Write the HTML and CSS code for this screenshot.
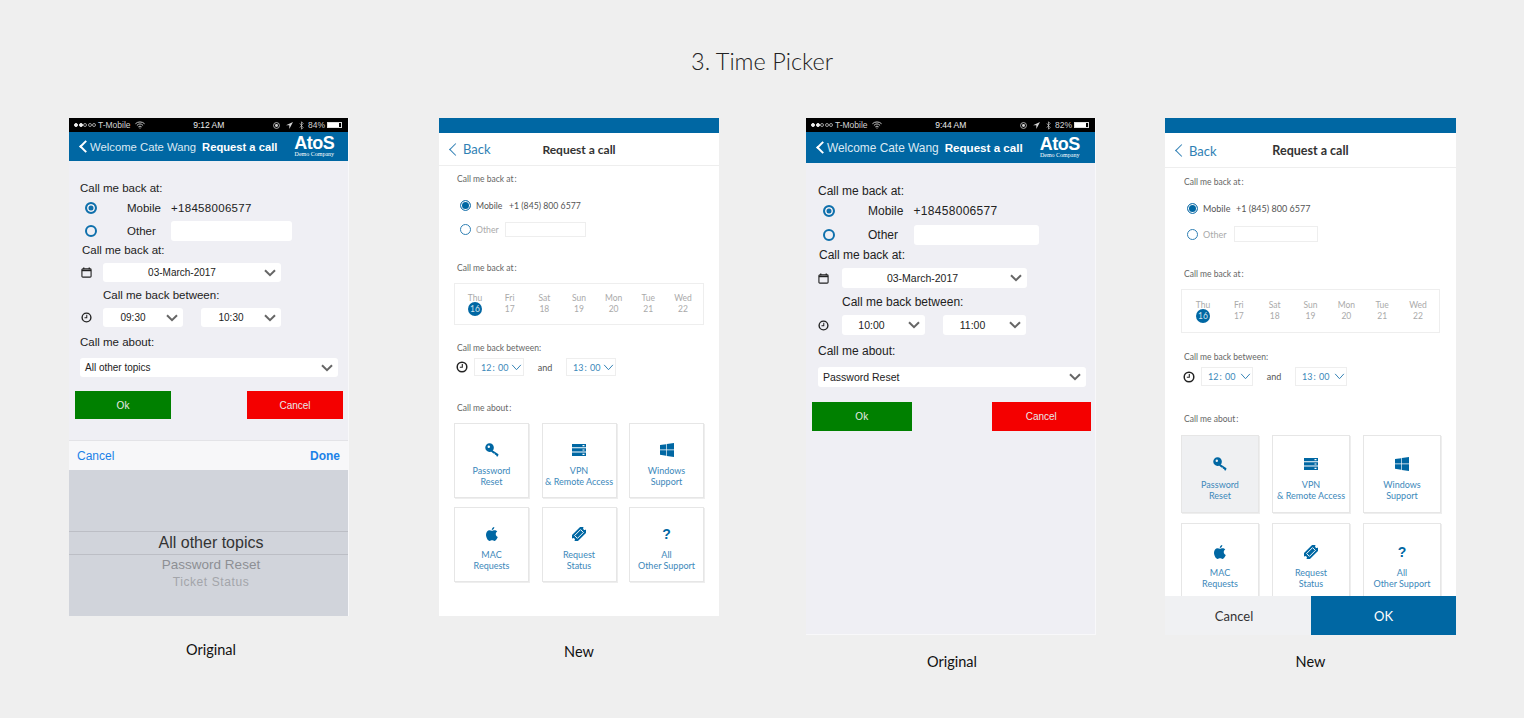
FILE: index.html
```html
<!DOCTYPE html>
<html lang="en">
<head>
  <meta charset="UTF-8" />
  <title>3. Time Picker</title>
  <link rel="stylesheet" href="styles.css">
</head>
<body>
  <svg class="sprite" width="0" height="0">
    <symbol id="i-chev" viewBox="0 0 12 8"><path d="M1 1.200l5 5 5-5" fill="none" stroke="currentColor" stroke-width="2"/></symbol>
    <symbol id="i-chev-thin" viewBox="0 0 12 8"><path d="M1 1l5 5.500L11 1" fill="none" stroke="currentColor" stroke-width="1.100"/></symbol>
    <symbol id="i-cal" viewBox="0 0 12 12"><path d="M3 .5v2M9 .5v2" stroke="currentColor" stroke-width="1.400"/><rect x="1" y="2" width="10" height="9" rx="1" fill="none" stroke="currentColor" stroke-width="1.200"/><path d="M1 3h10v1.600H1z" fill="currentColor"/></symbol>
    <symbol id="i-clock" viewBox="0 0 12 12"><circle cx="6" cy="6" r="4.800" fill="none" stroke="currentColor" stroke-width="1.500"/><path d="M6.300 3v3.200H3.800" fill="none" stroke="currentColor" stroke-width="1.100"/></symbol>
    <symbol id="i-key" viewBox="0 0 14 14"><path d="M4.600.3a4.300 4.300 0 1 1-.1 8.600 4.300 4.300 0 0 1 .1-8.600zm-.8 2.200a1.200 1.200 0 1 0 0 2.400 1.200 1.200 0 0 0 0-2.400z" fill-rule="evenodd" fill="currentColor"/><path d="M7 7l6.500 4.200-.6 2.300-1.500-.3-.2-1.300-1.300-.1-.2-1.300-1.300-.1L6 8.400z" fill="currentColor"/></symbol>
    <symbol id="i-server" viewBox="0 0 14 12"><path d="M0 0h14v3.300H0zM0 4.300h14v3.300H0zM0 8.600h14V12H0z" fill="currentColor"/><path d="M10.500 1h2v1.200h-2zM10.500 5.400h2v1.200h-2zM10.500 9.700h2v1.200h-2z" fill="#fff"/></symbol>
    <symbol id="i-win" viewBox="0 0 13 13"><path d="M0 1.900l5.700-.8v5H0zM6.300 1L13 0v6.100H6.300zM0 6.800h5.700v5L0 11zM6.300 6.800H13V13l-6.700-1z" fill="currentColor"/></symbol>
    <symbol id="i-apple" viewBox="0 0 12 14"><path d="M8.300 0c.1 1.400-1 2.900-2.500 3C5.600 1.700 6.900.2 8.300 0zM5.900 3.800c.7 0 1.500-.6 2.700-.6 1 0 2 .5 2.700 1.400-2.300 1.300-1.900 4.500.5 5.400-.7 1.700-1.900 3.900-3.300 3.900-.9 0-1.300-.6-2.400-.6-1.100 0-1.600.6-2.400.6C1.800 13.900 0 10.500 0 7.800c0-2.700 1.700-4.500 3.500-4.500 1 0 1.800.5 2.400.5z" fill="currentColor"/></symbol>
    <symbol id="i-ticket" viewBox="0 0 14 14"><g transform="rotate(-45 7 7)"><path d="M-1 2.800h16v2.700a1.500 1.500 0 0 0 0 3v2.700H-1V8.500a1.500 1.500 0 0 0 0-3z" fill="currentColor"/><rect x="2.800" y="5" width="8.400" height="4" fill="none" stroke="#fff" stroke-width=".9"/></g></symbol>
    <symbol id="i-wifi" viewBox="0 0 12 9"><path d="M.5 3a8 8 0 0 1 11 0M2.300 5a5.300 5.300 0 0 1 7.400 0M4 6.800a2.800 2.800 0 0 1 4 0" fill="none" stroke="currentColor" stroke-width="1.100"/><path d="M6 9L4.800 7.700h2.400z" fill="currentColor"/></symbol>
    <symbol id="i-lock" viewBox="0 0 9 9"><circle cx="4.500" cy="4.500" r="3.800" fill="none" stroke="currentColor"/><circle cx="4.500" cy="4.500" r="1.900" fill="currentColor"/></symbol>
    <symbol id="i-arrow" viewBox="0 0 8 8"><path d="M8 0L0 3.700h3.800V8z" fill="currentColor"/></symbol>
    <symbol id="i-bt" viewBox="0 0 6 10"><path d="M1 2.500l4 5L3 9.500V.5l2 2-4 5" fill="none" stroke="currentColor" stroke-width=".8"/></symbol>
  </svg>

  <h1 class="title">3. Time Picker</h1>

  <div class="board">

    <div class="col col-a">
      <div class="phone orig">
        <div class="status">
          <span class="carrier"><span class="dot on"></span><span class="dot on"></span><span class="dot"></span><span class="dot"></span><span class="dot"></span><span class="carrier-name">T-Mobile</span><svg class="wifi"><use href="#i-wifi"/></svg></span>
          <span class="clock-time">9:12 AM</span>
          <span class="status-right"><svg class="st-ic"><use href="#i-lock"/></svg><svg class="st-ic"><use href="#i-arrow"/></svg><svg class="st-bt"><use href="#i-bt"/></svg><span>84%</span><span class="battery"><span class="battery-fill"></span></span></span>
        </div>
        <div class="o-nav">
          <span class="o-chevron"></span>
          <span class="o-welcome">Welcome Cate Wang</span>
          <span class="o-navtitle">Request a call</span>
          <span class="logo"><span class="logo-main">AtoS</span><span class="logo-sub">Demo Company</span></span>
        </div>
        <div class="o-label o-h1">Call me back at:</div>
        <div class="o-row o-mobile"><span class="o-radio on"></span><span class="o-name">Mobile</span><span class="o-num">+18458006577</span></div>
        <div class="o-row o-other"><span class="o-radio"></span><span class="o-name">Other</span><span class="o-input"></span></div>
        <div class="o-label o-h2">Call me back at:</div>
        <div class="o-row o-date"><svg class="o-ic"><use href="#i-cal"/></svg><span class="o-select o-date-sel"><span>03-March-2017</span><svg class="chev"><use href="#i-chev"/></svg></span></div>
        <div class="o-label o-h3">Call me back between:</div>
        <div class="o-row o-times"><svg class="o-ic"><use href="#i-clock"/></svg><span class="o-select o-time-sel"><span>09:30</span><svg class="chev"><use href="#i-chev"/></svg></span><span class="o-select o-time-sel"><span>10:30</span><svg class="chev"><use href="#i-chev"/></svg></span></div>
        <div class="o-label o-h4">Call me about:</div>
        <div class="o-row o-topic"><span class="o-select o-topic-sel"><span>All other topics</span><svg class="chev"><use href="#i-chev"/></svg></span></div>
        <div class="o-actions"><span class="o-btn ok">Ok</span><span class="o-btn cancel">Cancel</span></div>
        <div class="toolbar"><span>Cancel</span><b>Done</b></div>
        <div class="picker">
          <div class="pick-main">All other topics</div>
          <div class="pick-two">Password Reset</div>
          <div class="pick-three">Ticket Status</div>
        </div>
      </div>
      <div class="caption cap-a">Original</div>
    </div>

    <div class="col col-b">
      <div class="phone new">
        <div class="n-bar"></div>
        <div class="n-nav"><span class="n-back"><span class="n-chevron"></span>Back</span><span class="n-title">Request a call</span></div>
        <div class="n-body">
          <div class="n-label n-h1">Call me back at<i>:</i></div>
          <div class="n-row n-mobile"><span class="n-radio on"></span><span class="n-name">Mobile</span><span>+1 (845) 800 6577</span></div>
          <div class="n-row n-other"><span class="n-radio"></span><span class="n-name dim">Other</span><span class="n-input"></span></div>
          <div class="n-label n-h2">Call me back at<i>:</i></div>
          <div class="days">
            <div class="day"><span>Thu</span><span class="num sel">16</span></div>
            <div class="day"><span>Fri</span><span class="num">17</span></div>
            <div class="day"><span>Sat</span><span class="num">18</span></div>
            <div class="day"><span>Sun</span><span class="num">19</span></div>
            <div class="day"><span>Mon</span><span class="num">20</span></div>
            <div class="day"><span>Tue</span><span class="num">21</span></div>
            <div class="day"><span>Wed</span><span class="num">22</span></div>
          </div>
          <div class="n-label n-h3">Call me back between:</div>
          <div class="n-row n-times"><svg class="n-clock"><use href="#i-clock"/></svg><span class="n-select">12<i>:</i> 00<svg class="chev-thin"><use href="#i-chev-thin"/></svg></span><span class="n-and">and</span><span class="n-select">13<i>:</i> 00<svg class="chev-thin"><use href="#i-chev-thin"/></svg></span></div>
          <div class="n-label n-h4">Call me about<i>:</i></div>
          <div class="tiles">
            <div class="tile"><svg class="t-ic"><use href="#i-key"/></svg><span>Password<br>Reset</span></div>
            <div class="tile"><svg class="t-ic"><use href="#i-server"/></svg><span>VPN<br>&amp; Remote Access</span></div>
            <div class="tile"><svg class="t-ic"><use href="#i-win"/></svg><span>Windows<br>Support</span></div>
            <div class="tile"><svg class="t-ic"><use href="#i-apple"/></svg><span>MAC<br>Requests</span></div>
            <div class="tile"><svg class="t-ic"><use href="#i-ticket"/></svg><span>Request<br>Status</span></div>
            <div class="tile"><b class="t-q">?</b><span>All<br>Other Support</span></div>
          </div>
        </div>
      </div>
      <div class="caption cap-b">New</div>
    </div>

    <div class="col col-c">
      <div class="phone orig orig-lg">
        <div class="status">
          <span class="carrier"><span class="dot on"></span><span class="dot on"></span><span class="dot"></span><span class="dot"></span><span class="dot"></span><span class="carrier-name">T-Mobile</span><svg class="wifi"><use href="#i-wifi"/></svg></span>
          <span class="clock-time">9:44 AM</span>
          <span class="status-right"><svg class="st-ic"><use href="#i-lock"/></svg><svg class="st-ic"><use href="#i-arrow"/></svg><svg class="st-bt"><use href="#i-bt"/></svg><span>82%</span><span class="battery"><span class="battery-fill"></span></span></span>
        </div>
        <div class="o-nav">
          <span class="o-chevron"></span>
          <span class="o-welcome">Welcome Cate Wang</span>
          <span class="o-navtitle">Request a call</span>
          <span class="logo"><span class="logo-main">AtoS</span><span class="logo-sub">Demo Company</span></span>
        </div>
        <div class="o-label o-h1">Call me back at:</div>
        <div class="o-row o-mobile"><span class="o-radio on"></span><span class="o-name">Mobile</span><span class="o-num">+18458006577</span></div>
        <div class="o-row o-other"><span class="o-radio"></span><span class="o-name">Other</span><span class="o-input"></span></div>
        <div class="o-label o-h2">Call me back at:</div>
        <div class="o-row o-date"><svg class="o-ic"><use href="#i-cal"/></svg><span class="o-select o-date-sel"><span>03-March-2017</span><svg class="chev"><use href="#i-chev"/></svg></span></div>
        <div class="o-label o-h3">Call me back between:</div>
        <div class="o-row o-times"><svg class="o-ic"><use href="#i-clock"/></svg><span class="o-select o-time-sel"><span>10:00</span><svg class="chev"><use href="#i-chev"/></svg></span><span class="o-select o-time-sel"><span>11:00</span><svg class="chev"><use href="#i-chev"/></svg></span></div>
        <div class="o-label o-h4">Call me about:</div>
        <div class="o-row o-topic"><span class="o-select o-topic-sel"><span>Password Reset</span><svg class="chev"><use href="#i-chev"/></svg></span></div>
        <div class="o-actions"><span class="o-btn ok">Ok</span><span class="o-btn cancel">Cancel</span></div>
      </div>
      <div class="caption cap-c">Original</div>
    </div>

    <div class="col col-d">
      <div class="phone new new-lg">
        <div class="n-bar"></div>
        <div class="n-nav"><span class="n-back"><span class="n-chevron"></span>Back</span><span class="n-title">Request a call</span></div>
        <div class="n-body">
          <div class="n-label n-h1">Call me back at<i>:</i></div>
          <div class="n-row n-mobile"><span class="n-radio on"></span><span class="n-name">Mobile</span><span>+1 (845) 800 6577</span></div>
          <div class="n-row n-other"><span class="n-radio"></span><span class="n-name dim">Other</span><span class="n-input"></span></div>
          <div class="n-label n-h2">Call me back at<i>:</i></div>
          <div class="days">
            <div class="day"><span>Thu</span><span class="num sel">16</span></div>
            <div class="day"><span>Fri</span><span class="num">17</span></div>
            <div class="day"><span>Sat</span><span class="num">18</span></div>
            <div class="day"><span>Sun</span><span class="num">19</span></div>
            <div class="day"><span>Mon</span><span class="num">20</span></div>
            <div class="day"><span>Tue</span><span class="num">21</span></div>
            <div class="day"><span>Wed</span><span class="num">22</span></div>
          </div>
          <div class="n-label n-h3">Call me back between:</div>
          <div class="n-row n-times"><svg class="n-clock"><use href="#i-clock"/></svg><span class="n-select">12<i>:</i> 00<svg class="chev-thin"><use href="#i-chev-thin"/></svg></span><span class="n-and">and</span><span class="n-select">13<i>:</i> 00<svg class="chev-thin"><use href="#i-chev-thin"/></svg></span></div>
          <div class="n-label n-h4">Call me about<i>:</i></div>
          <div class="tiles">
            <div class="tile active"><svg class="t-ic"><use href="#i-key"/></svg><span>Password<br>Reset</span></div>
            <div class="tile"><svg class="t-ic"><use href="#i-server"/></svg><span>VPN<br>&amp; Remote Access</span></div>
            <div class="tile"><svg class="t-ic"><use href="#i-win"/></svg><span>Windows<br>Support</span></div>
            <div class="tile"><svg class="t-ic"><use href="#i-apple"/></svg><span>MAC<br>Requests</span></div>
            <div class="tile"><svg class="t-ic"><use href="#i-ticket"/></svg><span>Request<br>Status</span></div>
            <div class="tile"><b class="t-q">?</b><span>All<br>Other Support</span></div>
          </div>
        </div>
        <div class="n-footer"><span class="f-cancel">Cancel</span><span class="f-ok">OK</span></div>
      </div>
      <div class="caption cap-d">New</div>
    </div>

  </div>
</body>
</html>
```

FILE: styles.css
```css
body {
  margin: 0;
  height: 718px;
  overflow: hidden;
  background-color: #efefef;
  font-family: "Liberation Sans", Arial, sans-serif;
}

.sprite {
  display: block;
  height: 0;
}

.title {
  margin: 0;
  padding-top: 46px;
  height: 118px;
  box-sizing: border-box;
  font-family: Lato, sans-serif;
  font-weight: 300;
  font-size: 23.5px;
  line-height: 30px;
  text-align: center;
  color: #222;
}

.board {
  display: flex;
  padding-left: 69px;
}

.col-a { width: 280px; }
.col-b { width: 280px; margin-left: 90px; }
.col-c { width: 290px; margin-left: 87px; }
.col-d { width: 291px; margin-left: 69px; }

.phone {
  display: flex;
  flex-direction: column;
  overflow: hidden;
  box-sizing: border-box;
  height: 498px;
}

.caption {
  font-family: Lato, sans-serif;
  font-size: 14.5px;
  line-height: 18px;
  text-align: center;
  color: #111;
}

.cap-a { margin-top: 25px; padding-left: 4px; }
.cap-b { margin-top: 27px; }
.cap-c { margin-top: 18px; padding-left: 2px; }
.cap-d { margin-top: 18px; }

.col-c .phone, .col-d .phone { height: 517px; }

/* original app */
.orig {
  background: #efeff4;
  border-right: 1px solid #f8f8fa;
  font-size: 11.5px;
  color: #222;
}

.orig-lg {
  font-size: 12px;
  border-bottom: 1px solid #f8f8fa;
}

.status {
  display: flex;
  justify-content: space-between;
  align-items: center;
  height: 14px;
  padding: 0 4px 0 5px;
  background: #000;
  color: #d5d5d5;
  font-size: 8.5px;
  flex-shrink: 0;
}

.carrier, .status-right {
  display: flex;
  align-items: center;
}

.dot {
  width: 4px;
  height: 4px;
  margin-right: .6px;
  border: .5px solid #999;
  border-radius: 50%;
  box-sizing: border-box;
}

.dot.on {
  background: #eee;
  border-color: #eee;
}

.carrier-name { margin-left: 1px; }

.wifi { width: 10px; height: 8px; margin-left: 4px; }
.st-ic { width: 7px; height: 7px; margin-right: 6px; }
.st-bt { width: 5px; height: 9px; margin-right: 4px; }

.clock-time {
  margin-left: 0;
  font-size: 8.5px;
  color: #eee;
}

.battery {
  display: block;
  width: 15px;
  height: 6px;
  margin: 0 2px 0 2px;
  border: 1px solid #ddd;
  box-sizing: border-box;
}

.battery-fill {
  display: block;
  width: 84%;
  height: 100%;
  background: #fff;
}

.o-nav {
  display: flex;
  align-items: center;
  height: 29px;
  flex-shrink: 0;
  padding-left: 10px;
  background: #0067a3;
  color: #dbe9f3;
  font-size: 11.3px;
}

.orig-lg .o-nav { height: 31px; font-size: 11.9px; }

.o-chevron {
  width: 9px;
  height: 9px;
  margin: 0 0 0 2px;
  box-sizing: border-box;
  border-left: 2px solid #fff;
  border-bottom: 2px solid #fff;
  transform: rotate(45deg);
}

.o-navtitle {
  margin-left: 6px;
  font-weight: bold;
  font-size: 11.2px;
  color: #fff;
}

.orig-lg .o-navtitle { font-size: 11.6px; }

.logo {
  display: flex;
  flex-direction: column;
  align-items: center;
  margin-left: 17px;
  color: #fff;
}

.orig-lg .logo { margin-left: 17px; }

.logo-main {
  font-weight: bold;
  font-size: 18px;
  line-height: 15px;
  letter-spacing: -.5px;
}

.logo-sub {
  font-family: "Liberation Serif", serif;
  font-size: 6px;
  line-height: 6px;
}

.o-label {
  height: 16px;
  line-height: 16px;
  padding-left: 11px;
}

.o-h1 { margin-top: 19px; }
.o-h2 { margin-top: 1px; padding-left: 13px; }
.o-h3 { margin-top: 5px; padding-left: 34px; }
.o-h4 { margin-top: 7px; }

.o-row {
  display: flex;
  align-items: center;
  height: 20px;
}

.o-mobile { margin-top: 2px; padding-left: 16px; }
.o-other { margin-top: 3px; padding-left: 16px; }
.o-date { margin-top: 5px; height: 19px; padding-left: 12px; }
.o-times { margin-top: 5px; height: 19px; padding-left: 12px; gap: 0 18px; }
.o-topic { margin-top: 8px; height: 19px; padding-left: 11px; }

.o-radio {
  width: 8px;
  height: 8px;
  border: 2px solid #0f70ac;
  border-radius: 50%;
  box-sizing: content-box;
  flex-shrink: 0;
  margin-right: 30px;
}

.o-radio.on {
  background: #0f70ac;
  box-shadow: inset 0 0 0 1.500px #efeff4;
}

.o-name { width: 44px; }

.o-num { letter-spacing: .3px; }

.o-input {
  display: block;
  width: 121px;
  height: 20px;
  background: #fff;
  border-radius: 3px;
}

.o-ic {
  width: 11px;
  height: 11px;
  margin-right: 11px;
  color: #222;
  flex-shrink: 0;
}

.o-times .o-ic { margin-right: -7px; }

.o-select {
  display: flex;
  align-items: center;
  height: 100%;
  box-sizing: border-box;
  padding: 0 5px;
  background: #fff;
  border-radius: 3px;
  font-size: 10px;
}

.o-select > span {
  flex: 1;
  padding-right: 8px;
  text-align: center;
}

.chev {
  width: 12px;
  height: 8px;
  color: #666;
  flex-shrink: 0;
}

.o-date-sel { width: 178px; }
.o-time-sel { width: 80px; }
.o-topic-sel { width: 258px; }
.o-topic-sel > span { text-align: left; }

.o-actions {
  display: flex;
  justify-content: space-between;
  margin-top: 14px;
  padding: 0 5px 0 6px;
}

.o-btn {
  width: 96px;
  height: 28px;
  line-height: 29px;
  text-align: center;
  color: #e8e8e8;
  font-size: 10px;
}

.o-btn.ok { background: #008000; }
.o-btn.cancel { background: #f40000; }

.toolbar {
  display: flex;
  justify-content: space-between;
  align-items: center;
  margin-top: 21px;
  height: 30px;
  flex-shrink: 0;
  padding: 0 8px 0 8px;
  background: #f7f7f9;
  border-top: 1px solid #e3e3e7;
  box-sizing: border-box;
  color: #1b82e8;
  font-size: 12px;
}

.picker {
  flex: 1;
  padding-top: 61px;
  background: #d1d4db;
  text-align: center;
}

.pick-main {
  height: 22px;
  padding-left: 5px;
  line-height: 22px;
  border-top: 1px solid #bcbec5;
  border-bottom: 1px solid #bcbec5;
  font-size: 16px;
  color: #333;
}

.pick-two {
  margin-top: 1px;
  padding-left: 5px;
  font-size: 13.5px;
  line-height: 17px;
  color: #8d8f94;
}

.pick-three {
  margin-top: 2px;
  padding-left: 5px;
  font-size: 12px;
  line-height: 14px;
  letter-spacing: .6px;
  color: #a3a5aa;
}

/* .orig-lg spacing */
.orig-lg .o-label { height: 16px; }
.orig-lg .o-h1 { margin-top: 20px; }
.orig-lg .o-mobile { margin-top: 2px; padding-left: 17px; }
.orig-lg .o-other { margin-top: 4px; padding-left: 17px; }
.orig-lg .o-h2 { margin-top: 2px; }
.orig-lg .o-h3 { margin-top: 6px; padding-left: 36px; }
.orig-lg .o-h4 { margin-top: 8px; }
.orig-lg .o-date { height: 20px; padding-left: 12px; margin-top: 5px; }
.orig-lg .o-times { height: 20px; padding-left: 12px; margin-top: 5px; }
.orig-lg .o-topic { height: 20px; margin-top: 8px; padding-left: 12px; }
.orig-lg .o-label.o-h1, .orig-lg .o-label.o-h4 { padding-left: 12px; }
.orig-lg .o-radio { margin-right: 33px; }
.orig-lg .o-name { width: 45.500px; }
.orig-lg .o-input { width: 125px; }
.orig-lg .o-ic { margin-right: 13px; }
.orig-lg .o-times .o-ic { margin-right: -5px; }
.orig-lg .o-select { font-size: 10.5px; }
.orig-lg .o-select > span { padding-right: 12px; }
.orig-lg .o-topic-sel > span { padding-right: 0; }
.orig-lg .o-date-sel { width: 185px; }
.orig-lg .o-time-sel { width: 83px; }
.orig-lg .o-topic-sel { width: 268px; }
.orig-lg .o-actions { margin-top: 15px; padding: 0 4px 0 6px; }
.orig-lg .o-btn { width: 99.500px; height: 29px; line-height: 29px; }

/* redesign */
.new {
  background: #fff;
  font-family: Lato, sans-serif;
  font-size: 8.700px;
  color: #555;
}

.new-lg { font-size: 9px; }

.n-bar {
  height: 15px;
  flex-shrink: 0;
  background: #0067a3;
}

.n-nav {
  display: flex;
  align-items: center;
  height: 32px;
  flex-shrink: 0;
  position: relative;
  border-bottom: 1px solid #eee;
  box-sizing: content-box;
}

.new-lg .n-nav { height: 33px; margin-top: 1px; }

.n-back {
  display: flex;
  align-items: center;
  padding-left: 12px;
  font-size: 13px;
  color: #2f7fb4;
}

.n-chevron {
  width: 9px;
  height: 9px;
  margin-right: 3px;
  box-sizing: border-box;
  border-left: 1.300px solid #2f7fb4;
  border-bottom: 1.300px solid #2f7fb4;
  transform: rotate(45deg);
}

.n-title {
  position: absolute;
  left: 0;
  right: 0;
  text-align: center;
  font-weight: bold;
  font-size: 12px;
  color: #333;
}

.new-lg .n-title { font-size: 12.500px; }

.n-body {
  flex: 1;
  overflow: hidden;
  padding-left: 15px;
}

.new-lg .n-body { padding-left: 16px; }

.n-label {
  height: 12px;
  line-height: 12px;
  padding-left: 3px;
  font-size: 8.5px;
  color: #666;
}

.n-label i { font-style: normal; margin-left: 1px; }

.n-h1 { margin-top: 7px; }
.n-h2 { margin-top: 25px; }
.n-h3 { margin-top: 17px; }
.n-h4 { margin-top: 26px; }

.n-row {
  display: flex;
  align-items: center;
  height: 14px;
  padding-left: 6px;
}

.n-mobile { margin-top: 13px; }
.n-other { margin-top: 10px; height: 15px; }
.n-times { margin-top: 4px; height: 18px; padding-left: 2px; }

.n-radio {
  width: 9px;
  height: 9px;
  margin-right: 5px;
  border: 1px solid #2f7fb4;
  border-radius: 50%;
  flex-shrink: 0;
}

.n-radio.on {
  background: #0067a3;
  box-shadow: inset 0 0 0 1px #fff;
}

.n-name { width: 33px; color: #555; }
.n-name.dim { width: 29px; color: #aaa; }

.n-input {
  display: block;
  width: 81px;
  height: 100%;
  border: 1px solid #eee;
  box-sizing: border-box;
}

.days {
  display: flex;
  justify-content: space-between;
  box-sizing: border-box;
  width: 250px;
  height: 42px;
  margin-top: 9px;
  padding: 9px 8px 0 8px;
  border: 1px solid #eee;
}

.day {
  display: flex;
  flex-direction: column;
  align-items: center;
  width: 24px;
  font-size: 8.5px;
  line-height: 10px;
  color: #aaa;
}

.num {
  display: block;
  width: 14px;
  height: 14px;
  margin-top: -1px;
  line-height: 14px;
  text-align: center;
}

.num.sel {
  background: #0067a3;
  border-radius: 50%;
  color: #cfe2ee;
}

.n-clock {
  width: 12px;
  height: 12px;
  margin-right: 6px;
  color: #222;
  flex-shrink: 0;
}

.n-select {
  display: flex;
  align-items: center;
  justify-content: space-between;
  box-sizing: border-box;
  width: 50px;
  height: 100%;
  padding: 0 1px 0 6px;
  border: 1px solid #eee;
  font-size: 9px;
  color: #3c88ba;
  white-space: pre;
}

.n-select i { font-style: normal; margin: 0 1px; }

.chev-thin {
  width: 11px;
  height: 7px;
  color: #2f7fb4;
  margin-left: auto;
}

.n-and {
  width: 42px;
  font-size: 9px;
  text-align: center;
  color: #555;
}

.tiles {
  display: grid;
  grid-template-columns: 75px 75px 75px;
  grid-auto-rows: 75px;
  gap: 9px 12.500px;
  margin-top: 9px;
}

.tile {
  display: flex;
  flex-direction: column;
  align-items: center;
  box-sizing: border-box;
  padding-top: 19px;
  border: 1px solid #e6e6e6;
  box-shadow: 1px 1px 0 #eee;
  text-align: center;
  font-size: 9px;
  line-height: 11px;
  color: #3c88ba;
}

.t-ic {
  width: 14px;
  height: 14px;
  margin-bottom: 8px;
  color: #0067a3;
}

.t-q {
  display: block;
  height: 14px;
  margin-bottom: 8px;
  font-family: "Liberation Sans", sans-serif;
  font-size: 14px;
  line-height: 14px;
  color: #0067a3;
}

.tile.active { background: #eff0f2; }

/* .new-lg spacing */
.new-lg .n-h1 { margin-top: 8px; }
.new-lg .n-h2 { margin-top: 26px; }
.new-lg .n-h3 { margin-top: 18px; }
.new-lg .n-h4 { margin-top: 27px; }
.new-lg .n-mobile { margin-top: 13px; }
.new-lg .n-other { margin-top: 11px; height: 16px; }
.new-lg .n-times { height: 19px; }
.new-lg .n-name.dim { width: 31px; }
.new-lg .n-input { width: 84px; }
.new-lg .days { width: 259px; height: 44px; margin-top: 9px; padding: 10px 9px 0; }
.new-lg .n-select { width: 52px; }
.new-lg .tiles {
  grid-template-columns: 78px 78px 78px;
  grid-auto-rows: 78px;
  gap: 10px 13px;
  margin-top: 10px;
}
.new-lg .tile { padding-top: 21px; }

.n-footer {
  display: flex;
  height: 39px;
  flex-shrink: 0;
  font-size: 13px;
  line-height: 40px;
  text-align: center;
}

.f-cancel {
  box-sizing: border-box;
  width: 146px;
  padding-right: 8px;
  background: #f0f1f3;
  color: #333;
}

.f-ok {
  flex: 1;
  background: #0067a3;
  color: #fff;
}
```
